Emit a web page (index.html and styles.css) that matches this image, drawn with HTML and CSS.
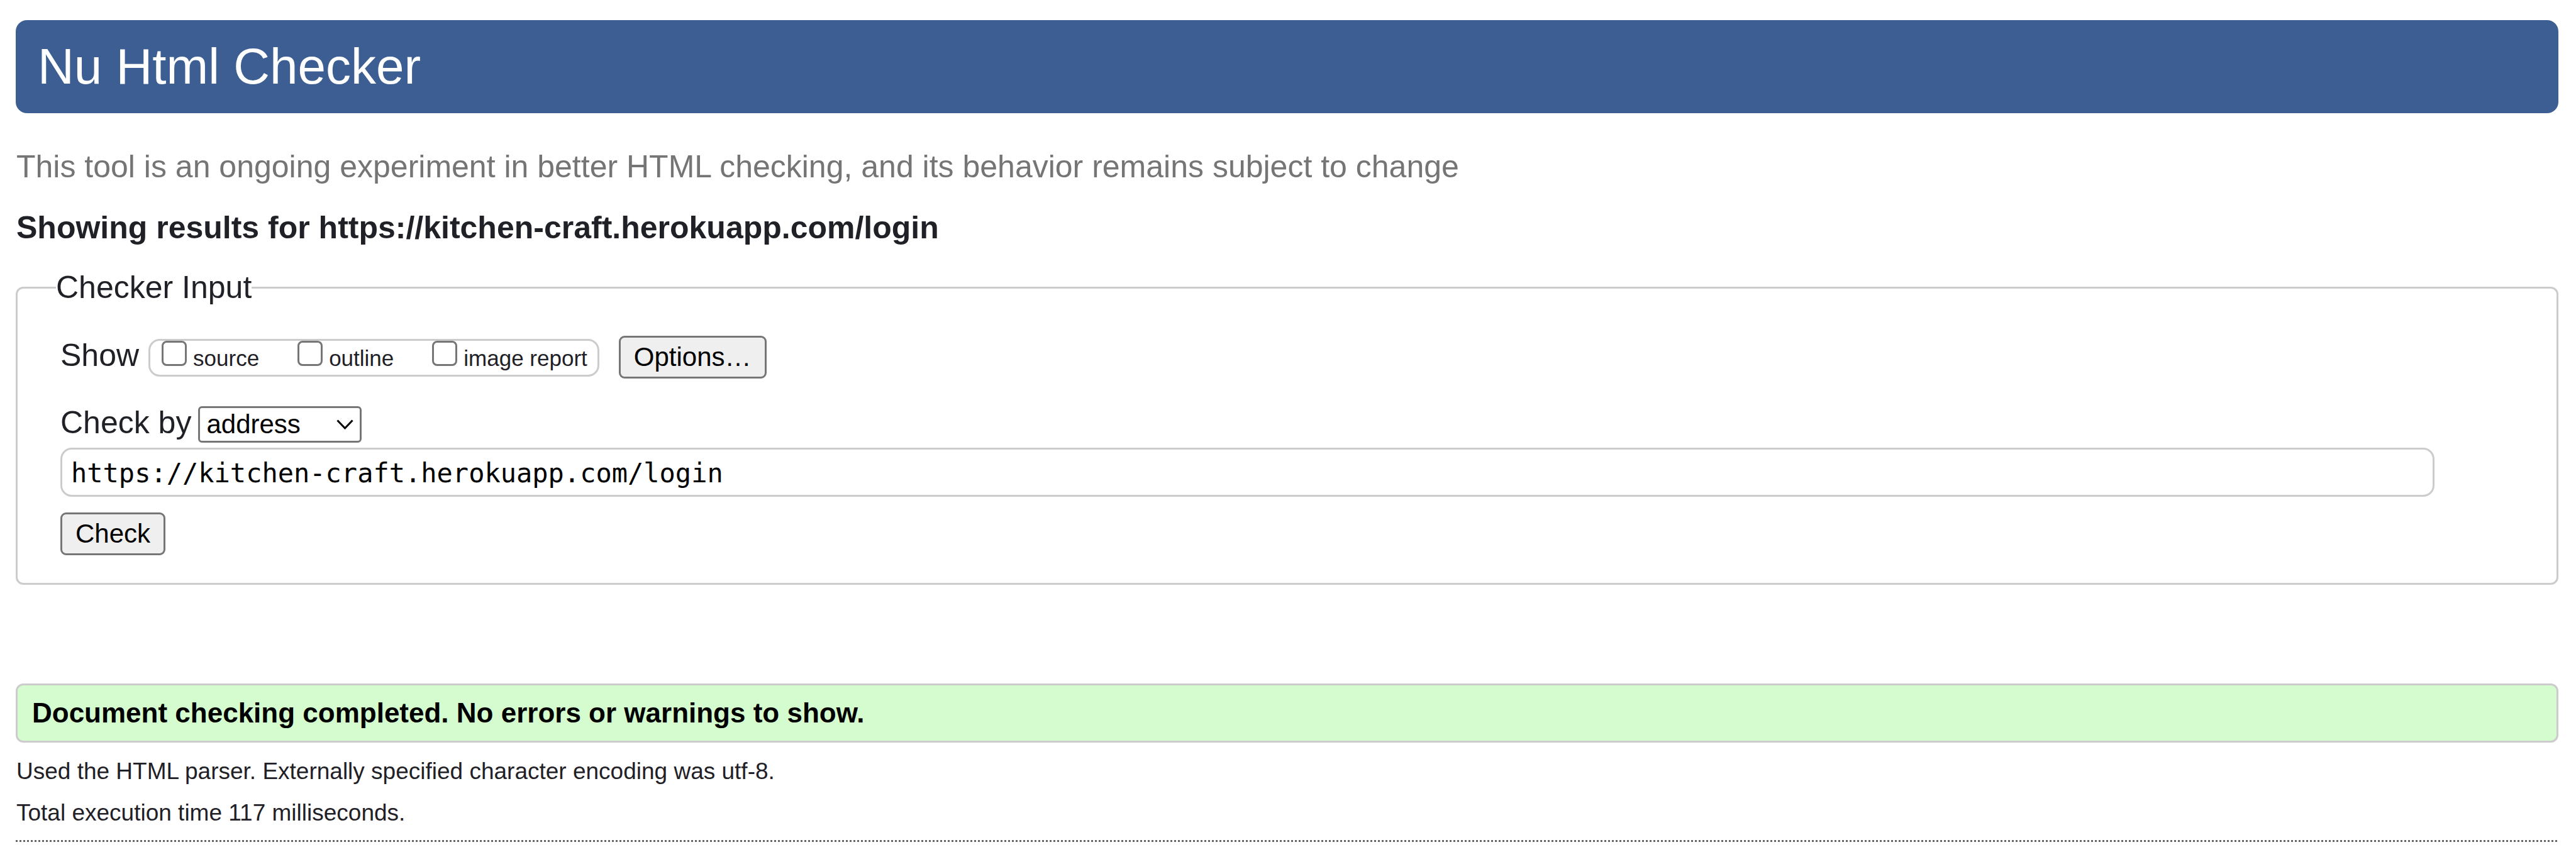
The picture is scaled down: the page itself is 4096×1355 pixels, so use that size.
FILE: index.html
```html
<!DOCTYPE html>
<html lang="en">
<head>
<meta charset="utf-8">
<title>Showing results for https://kitchen-craft.herokuapp.com/login - Nu Html Checker</title>
<link rel="stylesheet" href="styles.css">
</head>
<body>
<header class="banner"><h1>Nu Html Checker</h1></header>
<main>
<p class="tagline">This tool is an ongoing experiment in better HTML checking, and its behavior remains subject to change</p>
<h2>Showing results for https://kitchen-craft.herokuapp.com/login</h2>
<form class="checker">
<fieldset>
<legend>Checker Input</legend>
<div class="row show-row">
<span>Show</span>
<div class="options">
<label><input type="checkbox" name="showsource">source</label>
<label><input type="checkbox" name="showoutline">outline</label>
<label><input type="checkbox" name="showimagereport">image report</label>
</div>
<button type="button">Options…</button>
</div>
<div class="row method-row">
<label for="method">Check by</label>
<span class="select">
<select id="method"><option>address</option><option>file upload</option><option>text input</option></select>
<svg class="chevron" viewBox="0 0 27 16" aria-hidden="true"><path d="M1.500 1.500 13.500 14 25.500 1.500"/></svg>
</span>
</div>
<input class="address" type="text" aria-label="Address" spellcheck="false" value="https://kitchen-craft.herokuapp.com/login">
<button type="submit">Check</button>
</fieldset>
</form>
<p class="success">Document checking completed. No errors or warnings to show.</p>
<p class="detail">Used the HTML parser. Externally specified character encoding was utf-8.</p>
<p class="detail">Total execution time 117 milliseconds.</p>
<hr>
</main>
</body>
</html>
```
FILE: styles.css
```css
* {
  box-sizing: border-box;
}

body {
  margin: 32px 28px 0 25px;
  background: #fff;
  color: #1f2126;
  font: 50px/60px "Liberation Sans", Arial, sans-serif;
}

h1, h2, p {
  margin: 0;
}

.banner {
  padding: 24px 36px 24px 35px;
  border-radius: 18px;
  background: #3c5e92;
  color: #fff;
}

h1 {
  font-size: 80px;
  font-weight: 400;
  line-height: 100px;
}

.tagline {
  margin-top: 55px;
  padding-left: 1px;
  color: #757575;
}

h2 {
  margin-top: 37px;
  padding-left: 1px;
  font-size: 50px;
  line-height: 60px;
}

fieldset {
  margin: 35px 0 0;
  padding: 47px 194px 44px 68px;
  border: 3px solid #ccc;
  border-radius: 12px;
}

legend {
  margin-left: -7px;
  padding: 0;
}

.row {
  display: flex;
  align-items: baseline;
}

.options {
  display: flex;
  align-items: baseline;
  gap: 61px;
  height: 60px;
  margin: 0 31px 0 15px;
  padding: 0 16px 0 18px;
  border: 3px solid #ccc;
  border-radius: 18px;
  font-size: 35px;
  line-height: 54px;
}

.options label {
  display: flex;
  align-items: baseline;
  gap: 10px;
}

input[type="checkbox"] {
  appearance: none;
  width: 40px;
  height: 40px;
  margin: 0;
  border: 3px solid #767676;
  border-radius: 8px;
  background: #fff;
}

button {
  height: 68px;
  padding: 0 21px;
  border: 3px solid #767676;
  border-radius: 9px;
  background: #efefef;
  color: #000;
  font: 42px/50px "Liberation Sans", Arial, sans-serif;
}

.method-row {
  margin-top: 40px;
}

.select {
  display: grid;
  align-items: center;
  width: 260px;
  margin-left: 11px;
}

select {
  grid-area: 1 / 1;
  appearance: none;
  height: 58px;
  padding: 0 10px;
  border: 3px solid #767676;
  border-radius: 6px;
  background: #fff;
  color: #000;
  font: 42px/50px "Liberation Sans", Arial, sans-serif;
}

.chevron {
  grid-area: 1 / 1;
  justify-self: end;
  width: 27px;
  height: 16px;
  margin-right: 13px;
  fill: none;
  stroke: #000;
  stroke-width: 3;
  pointer-events: none;
}

.address {
  display: block;
  width: 100%;
  height: 78px;
  margin: 8px 0 25px;
  padding: 2px 14px 0;
  border: 3px solid #ccc;
  border-radius: 18px;
  background: #fff;
  color: #000;
  font: 42px/60px "DejaVu Sans Mono", monospace;
}

.success {
  margin: 157px 0 21px;
  padding: 16px 23px;
  border: 3px solid #ccc;
  border-radius: 12px;
  background: #d4fcce;
  color: #000;
  font-size: 44px;
  font-weight: 700;
  line-height: 56px;
}

.detail {
  margin-bottom: 16px;
  padding-left: 1px;
  font-size: 37px;
  line-height: 50px;
}

hr {
  height: 3px;
  margin: 18px 0 0;
  border: 0;
  background: repeating-linear-gradient(90deg, #666 0 3px, transparent 3px 6px);
}
```
